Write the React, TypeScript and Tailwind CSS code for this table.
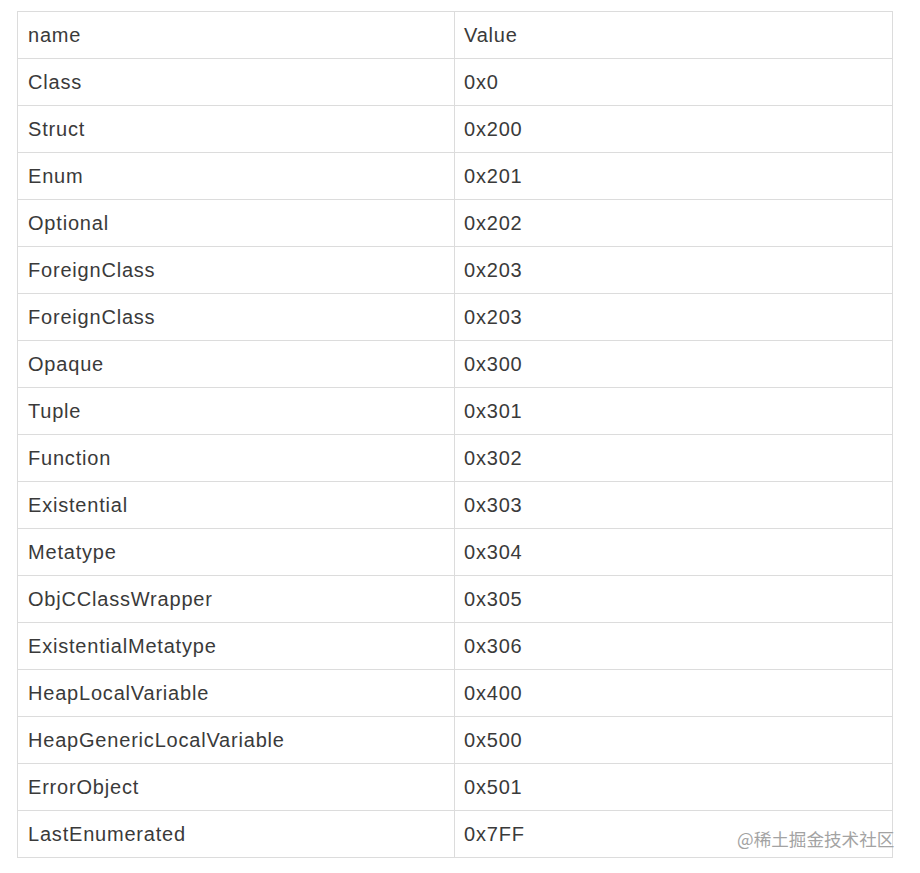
const rows: [string, string][] = [
  ['name', 'Value'],
  ['Class', '0x0'],
  ['Struct', '0x200'],
  ['Enum', '0x201'],
  ['Optional', '0x202'],
  ['ForeignClass', '0x203'],
  ['ForeignClass', '0x203'],
  ['Opaque', '0x300'],
  ['Tuple', '0x301'],
  ['Function', '0x302'],
  ['Existential', '0x303'],
  ['Metatype', '0x304'],
  ['ObjCClassWrapper', '0x305'],
  ['ExistentialMetatype', '0x306'],
  ['HeapLocalVariable', '0x400'],
  ['HeapGenericLocalVariable', '0x500'],
  ['ErrorObject', '0x501'],
  ['LastEnumerated', '0x7FF']
]

export default function App() {
  return (
    <main className="relative h-[873px] w-[920px] bg-white pl-[17px] pt-[11px] font-['Liberation_Sans',Arial,sans-serif]">
      <table className="w-[876px] table-fixed border-collapse text-[20px] tracking-[0.8px] text-[#3a3a3a]">
        <colgroup>
          <col className="w-[437px]" />
          <col />
        </colgroup>
        <tbody>
          {rows.map(([name, value], i) => (
            <tr key={i} className="h-[47px]">
              <td className="border border-[#dcdcdc] pl-[10px] align-middle leading-none">{name}</td>
              <td className="border border-[#dcdcdc] pl-[9px] align-middle leading-none">{value}</td>
            </tr>
          ))}
        </tbody>
      </table>
      <span className="absolute left-[737px] top-[830px] font-['Noto_Sans_CJK_SC',sans-serif] text-[17.6px] leading-none text-[#a3a3a3]">
        @稀土掘金技术社区
      </span>
    </main>
  )
}
